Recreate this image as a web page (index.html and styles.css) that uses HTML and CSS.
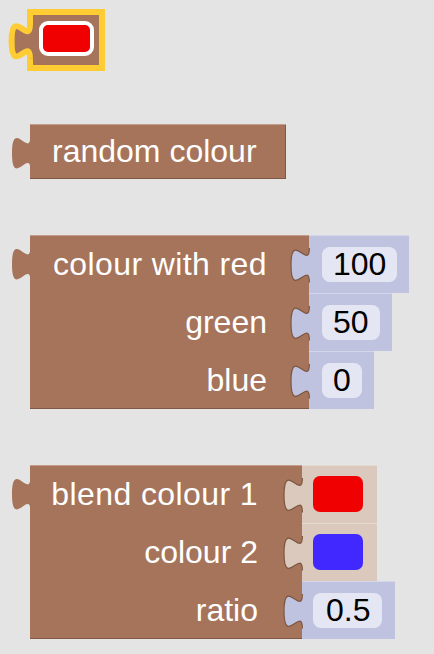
FILE: index.html
```html
<!DOCTYPE html>
<html lang="en">
<head>
    <meta charset="UTF-8">
    <meta name="viewport" content="width=device-width, initial-scale=1.0">
    <title>Colour blocks</title>
    <link rel="stylesheet" href="styles.css">
</head>
<body>
    <div class="flyout">
        <!-- colour picker (selected) -->
        <div class="block picker">
            <svg class="tab" width="30" height="45" viewBox="0 0 30 45">
                <path d="M21,5 C21,28 2.6,-13.4 2.6,22.25 S21,16.5 21,39.5 L27,39.5 L27,5 Z" fill="#a5745b"/>
                <path d="M21,5 C21,28 2.6,-13.4 2.6,22.25 S21,16.5 21,39.5" fill="none" stroke="#fc3" stroke-width="6"/>
            </svg>
            <div class="swatch big"><span></span></div>
        </div>

        <!-- random colour -->
        <div class="block plain">
            <svg class="out-tab" width="20.7" height="34.5" viewBox="-8 0 9 15" preserveAspectRatio="none">
                <path d="M0,0 C0,10 -8,-8 -8,7.5 S0,5 0,15 L1,15 L1,0 Z"/>
            </svg>
            <span class="label">random colour</span>
        </div>

        <!-- colour with rgb -->
        <div class="block multi">
            <div class="body rgb">
                <svg class="out-tab" width="20.7" height="34.5" viewBox="-8 0 9 15" preserveAspectRatio="none">
                    <path d="M0,0 C0,10 -8,-8 -8,7.5 S0,5 0,15 L1,15 L1,0 Z"/>
                </svg>
                <div class="row first">colour with red</div>
                <div class="row">green</div>
                <div class="row">blue</div>
            </div>
            <div class="inputs">
                <div class="socket num">
                    <svg class="in-tab" width="20.7" height="34.5" viewBox="-8 0 9 15" preserveAspectRatio="none">
                        <path d="M0,0 C0,10 -8,-8 -8,7.5 S0,5 0,15 L1,15 L1,0 Z"/>
                        <path class="edge" d="M0,0 C0,10 -8,-8 -8,7.5 S0,5 0,15"/>
                    </svg>
                    <span class="pill">100</span>
                </div>
                <div class="socket num">
                    <svg class="in-tab" width="20.7" height="34.5" viewBox="-8 0 9 15" preserveAspectRatio="none">
                        <path d="M0,0 C0,10 -8,-8 -8,7.5 S0,5 0,15 L1,15 L1,0 Z"/>
                        <path class="edge" d="M0,0 C0,10 -8,-8 -8,7.5 S0,5 0,15"/>
                    </svg>
                    <span class="pill">50</span>
                </div>
                <div class="socket num">
                    <svg class="in-tab" width="20.7" height="34.5" viewBox="-8 0 9 15" preserveAspectRatio="none">
                        <path d="M0,0 C0,10 -8,-8 -8,7.5 S0,5 0,15 L1,15 L1,0 Z"/>
                        <path class="edge" d="M0,0 C0,10 -8,-8 -8,7.5 S0,5 0,15"/>
                    </svg>
                    <span class="pill">0</span>
                </div>
            </div>
        </div>

        <!-- blend -->
        <div class="block multi">
            <div class="body blend">
                <svg class="out-tab" width="20.7" height="34.5" viewBox="-8 0 9 15" preserveAspectRatio="none">
                    <path d="M0,0 C0,10 -8,-8 -8,7.5 S0,5 0,15 L1,15 L1,0 Z"/>
                </svg>
                <div class="row first">blend colour 1</div>
                <div class="row">colour 2</div>
                <div class="row">ratio</div>
            </div>
            <div class="inputs">
                <div class="socket col">
                    <svg class="in-tab" width="20.7" height="34.5" viewBox="-8 0 9 15" preserveAspectRatio="none">
                        <path d="M0,0 C0,10 -8,-8 -8,7.5 S0,5 0,15 L1,15 L1,0 Z"/>
                        <path class="edge" d="M0,0 C0,10 -8,-8 -8,7.5 S0,5 0,15"/>
                    </svg>
                    <span class="swatch red"></span>
                </div>
                <div class="socket col">
                    <svg class="in-tab" width="20.7" height="34.5" viewBox="-8 0 9 15" preserveAspectRatio="none">
                        <path d="M0,0 C0,10 -8,-8 -8,7.5 S0,5 0,15 L1,15 L1,0 Z"/>
                        <path class="edge" d="M0,0 C0,10 -8,-8 -8,7.5 S0,5 0,15"/>
                    </svg>
                    <span class="swatch blue"></span>
                </div>
                <div class="socket num tight">
                    <svg class="in-tab" width="20.7" height="34.5" viewBox="-8 0 9 15" preserveAspectRatio="none">
                        <path d="M0,0 C0,10 -8,-8 -8,7.5 S0,5 0,15 L1,15 L1,0 Z"/>
                        <path class="edge" d="M0,0 C0,10 -8,-8 -8,7.5 S0,5 0,15"/>
                    </svg>
                    <span class="pill wide">0.5</span>
                </div>
            </div>
        </div>
    </div>
</body>
</html>
```

FILE: styles.css
```css
body {
    margin: 0;
    background-color: #e4e4e4;
    font-family: "Liberation Sans", Arial, sans-serif;
    font-size: 32px;
    color: white;
}
.flyout {
    display: flex;
    flex-direction: column;
    align-items: flex-start;
    gap: 56px;
    padding: 12px 0 0 30px;
}
.block {
    position: relative;
}
.out-tab, .in-tab, .tab {
    position: absolute;
    overflow: visible;
}
.out-tab {
    left: -18.4px;
    top: 11.5px;
    fill: #a5745b;
}
.tab {
    left: -21px;
    top: 6.5px;
}

/* selected colour picker */
.picker {
    width: 72px;
    height: 56px;
    box-sizing: border-box;
    padding: 9px;
    background-color: #a5745b;
    box-shadow: 0 0 0 3px #fc3, inset 0 0 0 3px #fc3;
}
.swatch {
    display: block;
    box-sizing: border-box;
}
.swatch.big {
    width: 55px;
    height: 35px;
    border: 4px solid white;
    border-radius: 9px;
    background-color: #f00000;
}
.swatch.red, .swatch.blue {
    width: 50px;
    height: 36px;
    border-radius: 7px;
}
.swatch.red {
    background-color: #f00000;
}
.swatch.blue {
    background-color: #4028ff;
}

/* plain block */
.plain {
    height: 55px;
    line-height: 55px;
    padding: 0 29px 0 22px;
    background-color: #a5745b;
    box-shadow: inset 0 1px #c39d89, inset -1px -1px #7f5944;
}

/* blocks with inputs */
.multi {
    display: flex;
    align-items: flex-start;
}
.body {
    position: relative;
    box-sizing: border-box;
    background-color: #a5745b;
    box-shadow: inset 0 1px #c39d89, inset 0 -1px #7f5944;
    text-align: right;
}
.body.rgb {
    width: 279px;
    padding-right: 42px;
}
.body.blend {
    width: 272px;
    padding-right: 44px;
}
.row {
    height: 58px;
    line-height: 58px;
    white-space: nowrap;
}
.row.first {
    letter-spacing: 0.4px;
}
.inputs {
    display: flex;
    flex-direction: column;
    align-items: flex-start;
}
.socket {
    position: relative;
    display: flex;
    align-items: flex-start;
    box-sizing: border-box;
    height: 58px;
    padding: 11px 12px 0 13px;
    border-top: 1px solid #d4d6ec;
}
.socket.num {
    background-color: #c0c3e0;
}
.socket.col {
    background-color: #dac9bc;
    border-top-color: #e6dbd2;
    padding: 10px 14px 0 11px;
}
.socket.tight {
    padding: 11px 13px 0 11px;
}
.in-tab {
    left: -18.4px;
    top: 11.5px;
}
.num .in-tab {
    fill: #c0c3e0;
}
.col .in-tab {
    fill: #dac9bc;
}
.edge {
    fill: none;
    stroke: #7b5641;
    stroke-width: 1.2;
    vector-effect: non-scaling-stroke;
}
.pill {
    height: 35px;
    line-height: 35px;
    padding: 0 11px;
    border-radius: 8px;
    background-color: #e5e6f3;
    color: black;
}
.pill.wide {
    padding: 0 12px 0 13px;
}
```
